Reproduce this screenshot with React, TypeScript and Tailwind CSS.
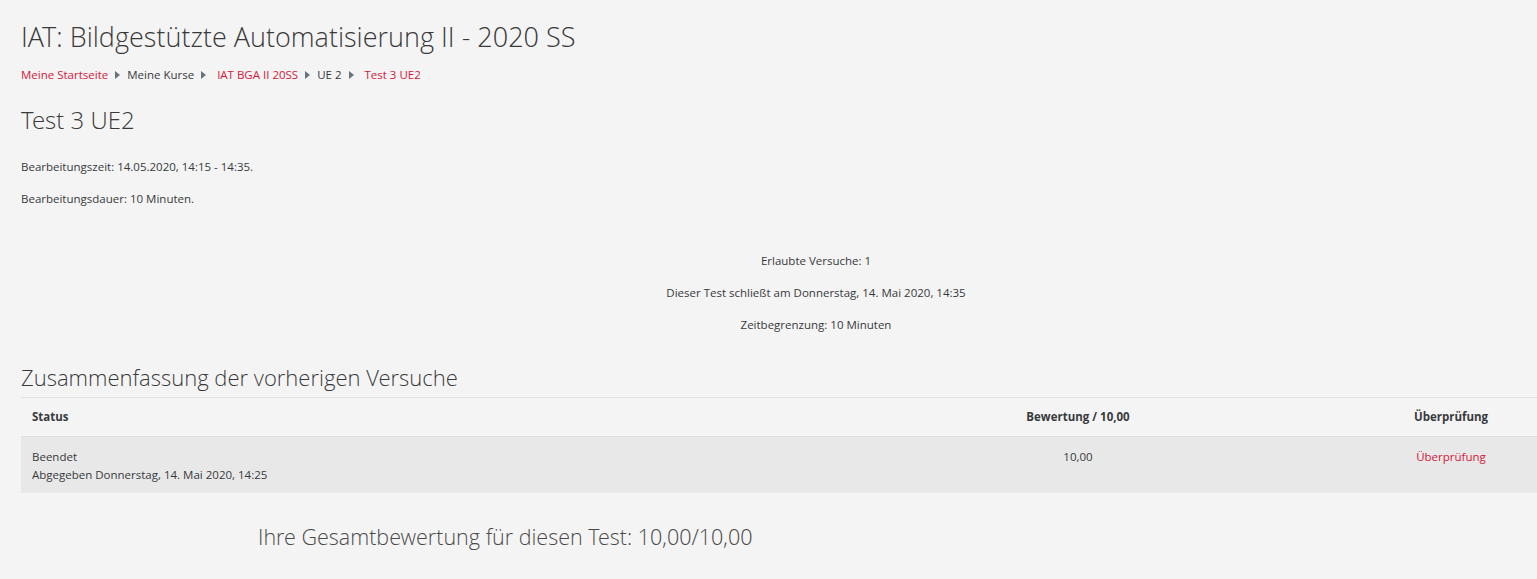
import { Fragment } from "react";

const crumbs = [
  { label: "Meine Startseite", link: true },
  { label: "Meine Kurse", link: false },
  { label: "IAT BGA II 20SS", link: true },
  { label: "UE 2", link: false },
  { label: "Test 3 UE2", link: true },
];

const light = { fontFamily: '"Open Sans Light", "Open Sans", "Noto Sans", sans-serif' };

function Caret() {
  return (
    <svg width="5" height="8" viewBox="0 0 5 8" className="mx-[7px] shrink-0">
      <path d="M0 0 L5 4 L0 8 Z" fill="#6a737b" />
    </svg>
  );
}

export default function App() {
  return (
    <div
      className="min-h-screen bg-[#f4f4f4] text-[#373a3c] overflow-hidden"
      style={{ fontFamily: '"Open Sans", "Noto Sans", sans-serif' }}
    >
      <div className="w-[1590px] ml-[21px]">
        <h1
          className="pt-[19px] text-[27px] leading-[36px] font-light text-[#3a3a3a]"
          style={light}
        >
          IAT: Bildgestützte Automatisierung II - 2020 SS
        </h1>

        <nav className="mt-[12px] flex items-center text-[11.5px] leading-[16px]">
          {crumbs.map((c, i) => (
            <Fragment key={c.label}>
              {i > 0 && <Caret />}
              <a
                href="#"
                className={
                  c.link ? "text-[#d5173b] ml-[4px] first:ml-0" : "text-[#373a3c]"
                }
              >
                {c.label}
              </a>
            </Fragment>
          ))}
        </nav>

        <h2
          className="mt-[21px] text-[24px] leading-[32px] font-light text-[#3a3a3a]"
          style={light}
        >
          Test 3 UE2
        </h2>

        <div className="mt-[23px] text-[11.5px] leading-[16px] space-y-[16px]">
          <p>Bearbeitungszeit: 14.05.2020, 14:15 - 14:35.</p>
          <p>Bearbeitungsdauer: 10 Minuten.</p>
        </div>

        <div className="mt-[46px] text-center text-[11.5px] leading-[16px] space-y-[16px]">
          <p>Erlaubte Versuche: 1</p>
          <p>Dieser Test schließt am Donnerstag, 14. Mai 2020, 14:35</p>
          <p>Zeitbegrenzung: 10 Minuten</p>
        </div>

        <h3
          className="mt-[30px] text-[22px] leading-[28px] font-light text-[#3a3a3a]"
          style={light}
        >
          Zusammenfassung der vorherigen Versuche
        </h3>

        <table className="mt-[6px] w-full text-[11.5px] border-collapse">
          <thead>
            <tr className="border-t border-b border-[#dee2e6]">
              <th className="text-left font-bold px-[11px] h-[39px]">Status</th>
              <th className="w-[426px] text-center font-bold">Bewertung / 10,00</th>
              <th className="w-[320px] text-center font-bold">Überprüfung</th>
            </tr>
          </thead>
          <tbody>
            <tr className="bg-[#e8e8e8] h-[56px] align-top">
              <td className="px-[11px] pt-[11px] leading-[18px]">
                Beendet
                <br />
                Abgegeben Donnerstag, 14. Mai 2020, 14:25
              </td>
              <td className="text-center pt-[11px] leading-[18px]">10,00</td>
              <td className="text-center pt-[11px] leading-[18px]">
                <a href="#" className="text-[#d5173b]">
                  Überprüfung
                </a>
              </td>
            </tr>
          </tbody>
        </table>

        <p
          className="mt-[30px] ml-[237px] text-[21.5px] leading-[28px] font-light text-[#4a4a4a]"
          style={light}
        >
          Ihre Gesamtbewertung für diesen Test: 10,00/10,00
        </p>
      </div>
    </div>
  );
}
